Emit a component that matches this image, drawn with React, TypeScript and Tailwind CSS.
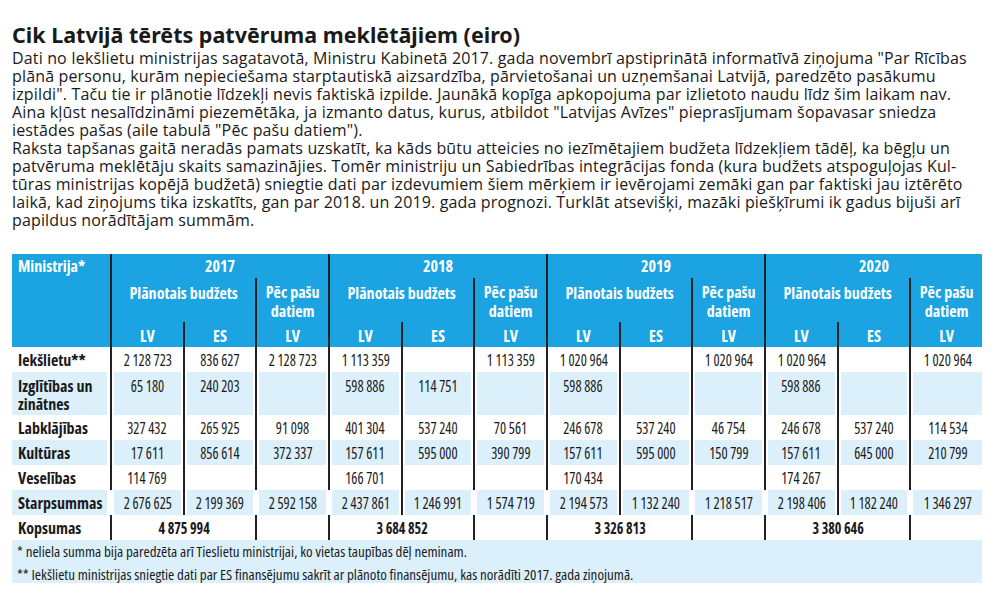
import React from 'react';
import clsx from 'clsx';

const years = ['2017', '2018', '2019', '2020'];

interface Row {
  name: React.ReactNode;
  values: string[];
  shaded?: boolean;
  tall?: boolean;
  // Starpsummas only keeps the LV|ES lines
  sparse?: boolean;
}

const rows: Row[] = [
  {
    name: 'Iekšlietu**',
    values: ['2 128 723', '836 627', '2 128 723', '1 113 359', '', '1 113 359', '1 020 964', '', '1 020 964', '1 020 964', '', '1 020 964'],
  },
  {
    name: (
      <>
        Izglītības un
        <br />
        zinātnes
      </>
    ),
    values: ['65 180', '240 203', '', '598 886', '114 751', '', '598 886', '', '', '598 886', '', ''],
    shaded: true,
    tall: true,
  },
  {
    name: 'Labklājības',
    values: ['327 432', '265 925', '91 098', '401 304', '537 240', '70 561', '246 678', '537 240', '46 754', '246 678', '537 240', '114 534'],
  },
  {
    name: 'Kultūras',
    values: ['17 611', '856 614', '372 337', '157 611', '595 000', '390 799', '157 611', '595 000', '150 799', '157 611', '645 000', '210 799'],
    shaded: true,
  },
  {
    name: 'Veselības',
    values: ['114 769', '', '', '166 701', '', '', '170 434', '', '', '174 267', '', ''],
  },
  {
    name: 'Starpsummas',
    values: ['2 676 625', '2 199 369', '2 592 158', '2 437 861', '1 246 991', '1 574 719', '2 194 573', '1 132 240', '1 218 517', '2 198 406', '1 182 240', '1 346 297'],
    shaded: true,
    sparse: true,
  },
];

const totals = ['4 875 994', '3 684 852', '3 326 813', '3 380 646'];

interface CellProps {
  children?: React.ReactNode;
  shaded?: boolean;
  line?: boolean;
  first?: boolean;
  last?: boolean;
  span2?: boolean;
  tall?: boolean;
  bold?: boolean;
}

const Cell: React.FC<CellProps> = ({ children, shaded, line = true, first, last, span2, tall, bold }) => (
  <div
    className={clsx(
      'flex',
      first ? 'pr-[3px]' : last ? 'pl-[2px]' : 'px-[2px]',
      !first && 'border-l-2',
      line ? 'border-[#222]' : 'border-white',
      span2 && 'col-span-2',
      tall ? 'h-[43px]' : 'h-[25px]'
    )}
  >
    <div
      className={clsx(
        'flex-1 flex leading-[18px] whitespace-nowrap',
        first ? 'justify-start pl-[6px]' : 'justify-center',
        shaded && 'bg-[#dcf0fc]',
        tall ? 'items-start pt-[5px]' : 'items-center',
        bold || first ? 'font-bold' : 'font-normal'
      )}
    >
      {first ? (
        <span>{children}</span>
      ) : (
        <span className={clsx('inline-block', bold ? 'scale-x-[0.88]' : 'scale-x-[0.9]')}>{children}</span>
      )}
    </div>
  </div>
);

export default function App() {
  return (
    <div className="w-[1000px] h-[606px] bg-white px-[12px] text-[#1a1a1a] font-['Open_Sans',sans-serif]">
      <h1 className="pt-[22px] text-[21.5px] leading-[26px] font-bold font-['Noto_Sans',sans-serif]">
        Cik Latvijā tērēts patvēruma meklētājiem (eiro)
      </h1>

      <div className="mt-[1px] text-[16px] leading-[18px] tracking-[0.15px] whitespace-nowrap">
        <p>Dati no Iekšlietu ministrijas sagatavotā, Ministru Kabinetā 2017. gada novembrī apstiprinātā informatīvā ziņojuma "Par Rīcības</p>
        <p>plānā personu, kurām nepieciešama starptautiskā aizsardzība, pārvietošanai un uzņemšanai Latvijā, paredzēto pasākumu</p>
        <p>izpildi". Taču tie ir plānotie līdzekļi nevis faktiskā izpilde. Jaunākā kopīga apkopojuma par izlietoto naudu līdz šim laikam nav.</p>
        <p>Aina kļūst nesalīdzināmi piezemētāka, ja izmanto datus, kurus, atbildot "Latvijas Avīzes" pieprasījumam šopavasar sniedza</p>
        <p>iestādes pašas (aile tabulā "Pēc pašu datiem").</p>
        <p>Raksta tapšanas gaitā neradās pamats uzskatīt, ka kāds būtu atteicies no iezīmētajiem budžeta līdzekļiem tādēļ, ka bēgļu un</p>
        <p>patvēruma meklētāju skaits samazinājies. Tomēr ministriju un Sabiedrības integrācijas fonda (kura budžets atspoguļojas Kul-</p>
        <p>tūras ministrijas kopējā budžetā) sniegtie dati par izdevumiem šiem mērķiem ir ievērojami zemāki gan par faktiski jau iztērēto</p>
        <p>laikā, kad ziņojums tika izskatīts, gan par 2018. un 2019. gada prognozi. Turklāt atsevišķi, mazāki piešķīrumi ik gadus bijuši arī</p>
        <p>papildus norādītājam summām.</p>
      </div>

      <div className="mt-[25px] w-[970px] font-stretch-condensed text-[16px]">
        {/* header */}
        <div className="grid grid-cols-[98px_repeat(12,minmax(0,1fr))] grid-rows-[24px_44px_25px] bg-[#1ba3e2] text-white font-bold leading-[18px]">
          <div className="row-span-3 pl-[6px] pt-[3px]">Ministrija*</div>
          {years.map((y) => (
            <div key={y} className="col-span-3 border-l-2 border-[#222] flex items-center justify-center">
              {y}
            </div>
          ))}
          {years.map((y) => (
            <React.Fragment key={y + 'b'}>
              <div className="col-span-2 border-l-2 border-[#222] text-center pt-[6px]">Plānotais budžets</div>
              <div className="border-l-2 border-[#222] text-center pt-[5px] leading-[19px]">
                Pēc pašu
                <br />
                datiem
              </div>
            </React.Fragment>
          ))}
          {years.map((y) => (
            <React.Fragment key={y + 'c'}>
              <div className="border-l-2 border-[#222] flex items-center justify-center pt-[2px]">LV</div>
              <div className="border-l-2 border-[#222] flex items-center justify-center pt-[2px]">ES</div>
              <div className="border-l-2 border-[#222] flex items-center justify-center pt-[2px]">LV</div>
            </React.Fragment>
          ))}
        </div>

        {/* body */}
        <div className="grid grid-cols-[98px_repeat(12,minmax(0,1fr))]">
          {rows.map((r, ri) => (
            <React.Fragment key={ri}>
              <Cell first shaded={r.shaded} tall={r.tall}>
                {r.name}
              </Cell>
              {r.values.map((v, i) => (
                <Cell
                  key={i}
                  shaded={r.shaded}
                  tall={r.tall}
                  last={i === 11}
                  line={!r.sparse || i % 3 === 1}
                >
                  {v}
                </Cell>
              ))}
            </React.Fragment>
          ))}
          <Cell first>Kopsumas</Cell>
          {totals.map((t, i) => (
            <React.Fragment key={t}>
              <Cell span2 bold>
                {t}
              </Cell>
              <Cell last={i === 3} />
            </React.Fragment>
          ))}
        </div>

        {/* footnotes */}
        <div className="h-[43px] bg-[#dcf0fc] pl-[5px] text-[15px] leading-[23px]">
          <p>* neliela summa bija paredzēta arī Tieslietu ministrijai, ko vietas taupības dēļ neminam.</p>
          <p>** Iekšlietu ministrijas sniegtie dati par ES finansējumu sakrīt ar plānoto finansējumu, kas norādīti 2017. gada ziņojumā.</p>
        </div>
      </div>
    </div>
  );
}
